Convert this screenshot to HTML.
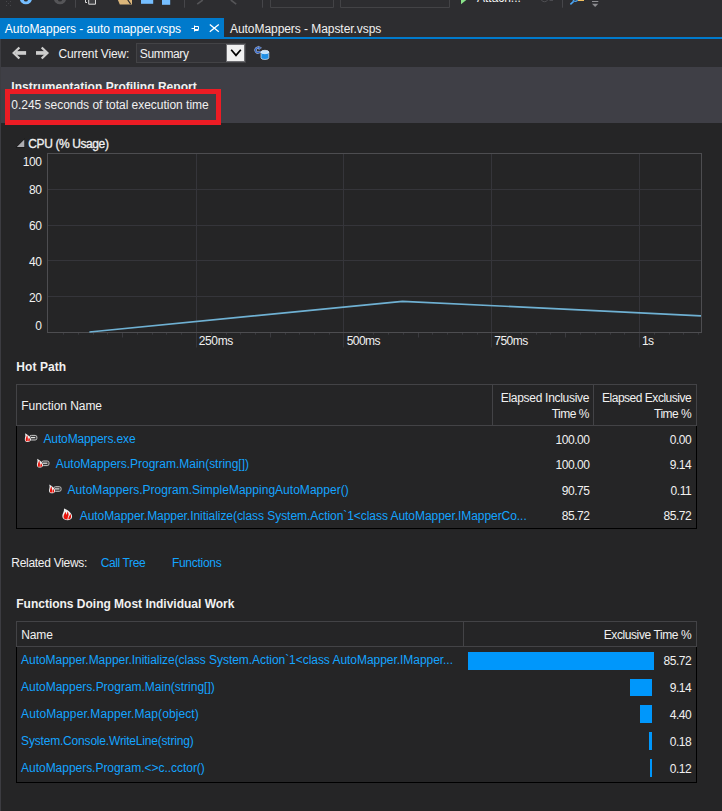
<!DOCTYPE html>
<html lang="en">
<head>
<meta charset="utf-8">
<title>Instrumentation Profiling Report</title>
<style>
html,body{margin:0;padding:0;}
body{width:722px;height:811px;overflow:hidden;position:relative;background:#252526;font-family:"Liberation Sans",sans-serif;font-size:12px;color:#f1f1f1;}
.a{position:absolute;}
.t{position:absolute;white-space:pre;line-height:16px;height:16px;font-size:12px;}
svg{position:absolute;left:0;top:0;}
</style>
</head>
<body>
<!-- top toolbar remnant + tab strip -->
<div class="a" style="left:0;top:0;width:722px;height:39px;background:#2d2d30"></div>
<div class="a" style="left:0;top:18px;width:224px;height:19px;background:#007acc"></div>
<div class="a" style="left:0;top:37px;width:722px;height:2px;background:#007acc"></div>
<!-- view toolbar -->
<div class="a" style="left:0;top:39px;width:722px;height:28px;background:#2d2d30"></div>
<div class="a" style="left:136px;top:43px;width:108px;height:18px;background:#333337;border:1px solid #434346"></div>
<div class="a" style="left:226px;top:44px;width:19px;height:18px;background:#f0f0f0;border:1px solid #6e6e72;box-sizing:border-box"></div>
<!-- header band -->
<div class="a" style="left:0;top:67px;width:722px;height:56px;background:#3f3f46"></div>
<div class="a" style="left:0;top:39px;width:1px;height:772px;background:#3c3c41"></div>

<!-- hot path table -->
<div class="a" style="left:16px;top:384px;width:679px;height:40px;border:1px solid #434346"></div>
<div class="a" style="left:492px;top:385px;width:1px;height:40px;background:#434346"></div>
<div class="a" style="left:593px;top:385px;width:1px;height:40px;background:#434346"></div>
<div class="a" style="left:16px;top:426px;width:679px;height:102px;border:1px solid #000;border-top:none"></div>

<!-- functions table -->
<div class="a" style="left:16px;top:621px;width:679px;height:24px;border:1px solid #434346"></div>
<div class="a" style="left:463px;top:622px;width:1px;height:24px;background:#434346"></div>
<div class="a" style="left:16px;top:647px;width:679px;height:135px;border:1px solid #000;border-top:none"></div>
<div class="a" style="left:468px;top:652px;width:186px;height:18px;background:#0097fb"></div>
<div class="a" style="left:630px;top:679px;width:22px;height:17px;background:#0097fb"></div>
<div class="a" style="left:640px;top:705px;width:12px;height:18px;background:#0097fb"></div>
<div class="a" style="left:649px;top:732px;width:3px;height:18px;background:#0097fb"></div>
<div class="a" style="left:650px;top:759px;width:2px;height:18px;background:#0097fb"></div>

<div class="t" id="t0" style="top:21px;color:#ffffff;left:4.75px;letter-spacing:-0.014px;">AutoMappers - auto mapper.vsps</div>
<div class="t" id="t1" style="top:21px;color:#f1f1f1;left:230px;letter-spacing:-0.057px;">AutoMappers - Mapster.vsps</div>
<div class="t" id="t2" style="top:-10px;color:#f1f1f1;left:477.1px;letter-spacing:-0.041px;">Attach...</div>
<div class="t" id="t3" style="top:46px;color:#f1f1f1;left:58.5px;letter-spacing:-0.132px;">Current View:</div>
<div class="t" id="t4" style="top:46px;color:#f1f1f1;left:139.75px;letter-spacing:-0.349px;">Summary</div>
<div class="t" id="t5" style="top:79px;color:#f1f1f1;font-weight:700;left:11.3px;letter-spacing:0.023px;">Instrumentation Profiling Report</div>
<div class="t" id="t6" style="top:97px;color:#f1f1f1;left:11.3px;letter-spacing:-0.020px;">0.245 seconds of total execution time</div>
<div class="t" id="t7" style="top:136px;color:#f1f1f1;-webkit-text-stroke:0.3px #f1f1f1;left:28.3px;letter-spacing:-0.397px;">CPU (% Usage)</div>
<div class="t" id="t8" style="top:154px;color:#f1f1f1;right:680.4px;letter-spacing:-0.420px;">100</div>
<div class="t" id="t9" style="top:182px;color:#f1f1f1;right:680.4px;letter-spacing:-0.420px;">80</div>
<div class="t" id="t10" style="top:218px;color:#f1f1f1;right:680.4px;letter-spacing:-0.420px;">60</div>
<div class="t" id="t11" style="top:254px;color:#f1f1f1;right:680.4px;letter-spacing:-0.420px;">40</div>
<div class="t" id="t12" style="top:290px;color:#f1f1f1;right:680.4px;letter-spacing:-0.420px;">20</div>
<div class="t" id="t13" style="top:318px;color:#f1f1f1;right:680.4px;letter-spacing:-0.420px;">0</div>
<div class="t" id="t14" style="top:333px;color:#f1f1f1;left:198.7px;letter-spacing:-0.358px;">250ms</div>
<div class="t" id="t15" style="top:333px;color:#f1f1f1;left:346.7px;letter-spacing:-0.558px;">500ms</div>
<div class="t" id="t16" style="top:333px;color:#f1f1f1;left:494.2px;letter-spacing:-0.483px;">750ms</div>
<div class="t" id="t17" style="top:333px;color:#f1f1f1;left:642px;letter-spacing:-0.600px;">1s</div>
<div class="t" id="t18" style="top:359px;color:#f1f1f1;font-weight:700;left:16.3px;letter-spacing:0.079px;">Hot Path</div>
<div class="t" id="t19" style="top:398px;color:#f1f1f1;left:21.3px;letter-spacing:-0.056px;">Function Name</div>
<div class="t" id="t20" style="top:390px;color:#f1f1f1;left:500.8px;letter-spacing:-0.299px;">Elapsed Inclusive</div>
<div class="t" id="t21" style="top:406px;color:#f1f1f1;left:551.7px;letter-spacing:-0.507px;">Time %</div>
<div class="t" id="t22" style="top:390px;color:#f1f1f1;left:602px;letter-spacing:-0.481px;">Elapsed Exclusive</div>
<div class="t" id="t23" style="top:406px;color:#f1f1f1;left:654px;letter-spacing:-0.507px;">Time %</div>
<div class="t" id="t24" style="top:431px;color:#14a4ff;left:43.5px;letter-spacing:-0.140px;">AutoMappers.exe</div>
<div class="t" id="t25" style="top:456px;color:#14a4ff;left:55.7px;letter-spacing:-0.024px;">AutoMappers.Program.Main(string[])</div>
<div class="t" id="t26" style="top:482px;color:#14a4ff;left:67.6px;letter-spacing:0.022px;">AutoMappers.Program.SimpleMappingAutoMapper()</div>
<div class="t" id="t27" style="top:508px;color:#14a4ff;left:79.7px;letter-spacing:-0.053px;">AutoMapper.Mapper.Initialize(class System.Action`1&lt;class AutoMapper.IMapperCo...</div>
<div class="t" id="t28" style="top:432px;color:#f1f1f1;right:132.4px;letter-spacing:-0.420px;">100.00</div>
<div class="t" id="t29" style="top:432px;color:#f1f1f1;right:30.7px;letter-spacing:-0.420px;">0.00</div>
<div class="t" id="t30" style="top:457px;color:#f1f1f1;right:132.4px;letter-spacing:-0.420px;">100.00</div>
<div class="t" id="t31" style="top:457px;color:#f1f1f1;right:30.7px;letter-spacing:-0.420px;">9.14</div>
<div class="t" id="t32" style="top:483px;color:#f1f1f1;right:132.4px;letter-spacing:-0.420px;">90.75</div>
<div class="t" id="t33" style="top:483px;color:#f1f1f1;right:30.7px;letter-spacing:-0.420px;">0.11</div>
<div class="t" id="t34" style="top:508px;color:#f1f1f1;right:132.4px;letter-spacing:-0.420px;">85.72</div>
<div class="t" id="t35" style="top:508px;color:#f1f1f1;right:30.7px;letter-spacing:-0.420px;">85.72</div>
<div class="t" id="t36" style="top:555px;color:#f1f1f1;left:11.3px;letter-spacing:-0.294px;">Related Views:</div>
<div class="t" id="t37" style="top:555px;color:#14a4ff;left:100.8px;letter-spacing:-0.404px;">Call Tree</div>
<div class="t" id="t38" style="top:555px;color:#14a4ff;left:171.9px;letter-spacing:-0.279px;">Functions</div>
<div class="t" id="t39" style="top:596px;color:#f1f1f1;font-weight:700;left:16.3px;letter-spacing:-0.010px;">Functions Doing Most Individual Work</div>
<div class="t" id="t40" style="top:627px;color:#f1f1f1;left:21.3px;letter-spacing:-0.139px;">Name</div>
<div class="t" id="t41" style="top:627px;color:#f1f1f1;left:603.7px;letter-spacing:-0.402px;">Exclusive Time %</div>
<div class="t" id="t42" style="top:652px;color:#14a4ff;left:21.1px;letter-spacing:-0.043px;">AutoMapper.Mapper.Initialize(class System.Action`1&lt;class AutoMapper.IMapper...</div>
<div class="t" id="t43" style="top:653px;color:#f1f1f1;right:30.7px;letter-spacing:-0.420px;">85.72</div>
<div class="t" id="t44" style="top:679px;color:#14a4ff;left:21.1px;letter-spacing:-0.014px;">AutoMappers.Program.Main(string[])</div>
<div class="t" id="t45" style="top:680px;color:#f1f1f1;right:30.7px;letter-spacing:-0.420px;">9.14</div>
<div class="t" id="t46" style="top:706px;color:#14a4ff;left:21.1px;letter-spacing:0.105px;">AutoMapper.Mapper.Map(object)</div>
<div class="t" id="t47" style="top:707px;color:#f1f1f1;right:30.7px;letter-spacing:-0.420px;">4.40</div>
<div class="t" id="t48" style="top:733px;color:#14a4ff;left:21.1px;letter-spacing:-0.188px;">System.Console.WriteLine(string)</div>
<div class="t" id="t49" style="top:734px;color:#f1f1f1;right:30.7px;letter-spacing:-0.420px;">0.18</div>
<div class="t" id="t50" style="top:760px;color:#14a4ff;left:21.1px;letter-spacing:-0.033px;">AutoMappers.Program.&lt;&gt;c..cctor()</div>
<div class="t" id="t51" style="top:761px;color:#f1f1f1;right:30.7px;letter-spacing:-0.420px;">0.12</div>

<!-- red annotation rectangle (on top of texts) -->
<div class="a" style="left:5px;top:89px;width:206px;height:26px;border:5px solid #ed1c24"></div>

<svg width="722" height="811" viewBox="0 0 722 811">
<g fill="#46464a"><rect x="6" y="1" width="1" height="1"/><rect x="10" y="1" width="1" height="1"/><rect x="8" y="3" width="1" height="1"/><rect x="6" y="5" width="1" height="1"/><rect x="10" y="5" width="1" height="1"/></g>
<circle cx="25.900" cy="-2" r="6.300" fill="#75beff"/><circle cx="25.900" cy="-0.650" r="2.150" fill="#2d2d30"/>
<circle cx="60" cy="-2" r="6.300" fill="#555558"/><circle cx="60" cy="-0.650" r="2.150" fill="#2d2d30"/>
<path d="M75.5 0V7.700" stroke="#46464a" stroke-width="1"/>
<path d="M184.5 0V7.700" stroke="#46464a" stroke-width="1"/>
<path d="M262.5 0V7.700" stroke="#46464a" stroke-width="1"/>
<path d="M562.5 0V7.700" stroke="#46464a" stroke-width="1"/>
<path d="M85.500 0V2.500H87" fill="none" stroke="#d8d8d8" stroke-width="1"/>
<path d="M88.700 0V4.200H95.500V0" fill="#3f3f42" stroke="#d8d8d8" stroke-width="1"/>
<path d="M117.900 0L119.800 4.600H132V0Z" fill="#dcb67a"/><path d="M127.800 0L130.600 4" stroke="#2d2d30" stroke-width="1.3"/>
<rect x="141" y="0" width="12.200" height="3.800" fill="#75beff"/>
<rect x="162" y="0" width="8.200" height="4.800" fill="#75beff"/>
<path d="M197.200 4.200L202.800 0" stroke="#555558" stroke-width="1.600"/>
<path d="M230.800 0L236.200 4.200" stroke="#555558" stroke-width="1.600"/>
<path d="M270.500 0V7.500H333.500V0" fill="none" stroke="#434346" stroke-width="1"/>
<path d="M340.500 0V7.500H449.500V0" fill="none" stroke="#434346" stroke-width="1"/>
<path d="M461 0H466.300L461 4.200Z" fill="#8ae28a"/>
<path d="M541.500 0A3.100 2.300 0 0 0 547.500 0" fill="none" stroke="#505054" stroke-width="1"/><rect x="549.500" y="0" width="3.500" height="0.900" fill="#505054"/>
<path d="M570.400 4.400L573.600 1.400" stroke="#4ba6f5" stroke-width="1.500"/><path d="M573 0A2.400 1.800 0 0 0 577.600 0" fill="none" stroke="#4ba6f5" stroke-width="1.200"/>
<rect x="578" y="0" width="6" height="1" fill="#f0c060"/>
<rect x="592" y="1" width="6.300" height="1" fill="#8c8c90"/><path d="M592 3.800H598.300L595.150 7Z" fill="#8c8c90"/>
<g fill="none" stroke="#ffffff" stroke-width="1"><path d="M191.500 28.500H194.500M194.500 25.500V31.500M194.500 26.500H198.500V29.500H194.500M194.500 30.500H198.500"/></g>
<path d="M209.800 24.400L218.800 31.800M218.800 24.400L209.800 31.800" stroke="#ffffff" stroke-width="1.300"/>
<g fill="none" stroke="#cdcdcd" stroke-width="2.300"><path d="M19.400 47.500L13.700 53L19.400 58.500"/><path d="M41.700 47.500L47.400 53L41.700 58.500"/></g>
<rect x="15.500" y="51.100" width="10.600" height="3.700" fill="#cdcdcd"/><rect x="36" y="51.100" width="10.600" height="3.700" fill="#cdcdcd"/>
<path d="M231.200 49.800L236 55.400L240.800 49.800" fill="none" stroke="#000" stroke-width="1.700"/>
<g><path d="M259.600 48.200A2.500 2.500 0 1 0 260.200 51.200" fill="none" stroke="#b4c4e0" stroke-width="2.200"/><path d="M259.600 48.200A2.500 2.500 0 1 0 260.200 51.200" fill="none" stroke="#2f63c8" stroke-width="1.200"/><path d="M258.400 46.200L261.600 47.800L258.800 49.800Z" fill="#2f63c8" stroke="#b4c4e0" stroke-width="0.400"/>
<path d="M261 52V57.800A3.900 1.700 0 0 0 268.800 57.800V52Z" fill="#1e8fe6" stroke="#dcecfa" stroke-width="0.700"/><ellipse cx="264.900" cy="52" rx="3.900" ry="1.700" fill="#c4e2fb" stroke="#eaf4fd" stroke-width="0.700"/></g>
<path d="M15.600 147.600H25V138.200Z" fill="#141414"/><path d="M16.800 147H24.300V139.500Z" fill="#acacb0"/>
<path d="M48 189.5H701M48 225.5H701M48 260.5H701M48 296.5H701M196.5 154V347.500M343.5 154V347.500M491.5 154V347.500M639.5 154V347.500" stroke="#35353a" stroke-width="1" fill="none"/>
<path d="M63.5 333V334.7M78.5 333V334.7M93.5 333V334.7M107.5 333V334.7M122.5 333V337.5M137.5 333V334.7M152.5 333V334.7M166.5 333V334.7M181.5 333V334.7M211.5 333V334.7M226.5 333V334.7M240.5 333V334.7M255.5 333V334.7M270.5 333V337.5M285.5 333V334.7M299.5 333V334.7M314.5 333V334.7M329.5 333V334.7M358.5 333V334.7M373.5 333V334.7M388.5 333V334.7M403.5 333V334.7M418.5 333V337.5M432.5 333V334.7M447.5 333V334.7M462.5 333V334.7M477.5 333V334.7M506.5 333V334.7M521.5 333V334.7M536.5 333V334.7M550.5 333V334.7M565.5 333V337.5M580.5 333V334.7M595.5 333V334.7M610.5 333V334.7M624.5 333V334.7M654.5 333V334.7M669.5 333V334.7M683.5 333V334.7M698.5 333V334.7" stroke="#3a3a3e" stroke-width="1" fill="none"/>
<rect x="47.500" y="153.500" width="654" height="179" fill="none" stroke="#4d4d50" stroke-width="1"/>
<path d="M89.400 332L402.500 301.300L701 315.800" fill="none" stroke="#6fb1d3" stroke-width="1.700" stroke-linejoin="round"/>
<g transform="translate(24.6,433)">
<rect x="5" y="2.400" width="7.300" height="4.600" rx="1.700" fill="#3a3a3a" stroke="#c4c4c4" stroke-width="1"/>
<path d="M6.200 4.600H10.600" stroke="#ececec" stroke-width="1.100"/>
<path d="M0.400 0.200C2.400 1.400 6.300 3.800 6.300 6.600C6.300 8.300 4.800 9 3.200 9C1.500 9 0.200 8.100 0.200 6.400C0.200 4.600 1.400 3 0.400 0.200Z" fill="#f0f0f0"/>
<path d="M1.300 7.900C0.700 6.400 1.600 4.200 2.500 2C3.200 3.600 3.400 5.600 3.100 8.200C2.400 8.400 1.700 8.300 1.300 7.900Z" fill="#e8120a"/>
<path d="M3.700 8.300C3.500 6.700 3.800 5.600 4.300 4.700C5.300 5.600 5.700 7 4.900 8.100C4.500 8.300 4.100 8.400 3.700 8.300Z" fill="#e8120a"/>
</g>
<g transform="translate(36.7,458.6)">
<rect x="5" y="2.400" width="7.300" height="4.600" rx="1.700" fill="#3a3a3a" stroke="#c4c4c4" stroke-width="1"/>
<path d="M6.200 4.600H10.600" stroke="#ececec" stroke-width="1.100"/>
<path d="M0.400 0.200C2.400 1.400 6.300 3.800 6.300 6.600C6.300 8.300 4.800 9 3.200 9C1.500 9 0.200 8.100 0.200 6.400C0.200 4.600 1.400 3 0.400 0.200Z" fill="#f0f0f0"/>
<path d="M1.300 7.900C0.700 6.400 1.600 4.200 2.500 2C3.200 3.600 3.400 5.600 3.100 8.200C2.400 8.400 1.700 8.300 1.300 7.900Z" fill="#e8120a"/>
<path d="M3.700 8.300C3.500 6.700 3.800 5.600 4.300 4.700C5.300 5.600 5.700 7 4.900 8.100C4.500 8.300 4.100 8.400 3.700 8.300Z" fill="#e8120a"/>
</g>
<g transform="translate(48.8,484.3)">
<rect x="5" y="2.400" width="7.300" height="4.600" rx="1.700" fill="#3a3a3a" stroke="#c4c4c4" stroke-width="1"/>
<path d="M6.200 4.600H10.600" stroke="#ececec" stroke-width="1.100"/>
<path d="M0.400 0.200C2.400 1.400 6.300 3.800 6.300 6.600C6.300 8.300 4.800 9 3.200 9C1.500 9 0.200 8.100 0.200 6.400C0.200 4.600 1.400 3 0.400 0.200Z" fill="#f0f0f0"/>
<path d="M1.300 7.900C0.700 6.400 1.600 4.200 2.500 2C3.200 3.600 3.400 5.600 3.100 8.200C2.400 8.400 1.700 8.300 1.300 7.900Z" fill="#e8120a"/>
<path d="M3.700 8.300C3.500 6.700 3.800 5.600 4.300 4.700C5.300 5.600 5.700 7 4.900 8.100C4.500 8.300 4.100 8.400 3.700 8.300Z" fill="#e8120a"/>
</g>
<g transform="translate(62.2,508.3)">
<path d="M1.800 0.200C4.300 1.100 9.900 4.200 9.900 8.100C9.900 10.700 7.800 11.900 5 11.900C2.100 11.900 0.100 10.600 0.100 7.800C0.100 5.400 2.200 3.300 1.800 0.200Z" fill="#f0f0f0"/>
<path d="M1.700 10C0.600 8 2.200 5.600 3.300 3.400C3.900 4.800 4.100 5.600 4.300 6.600C4.800 5.400 5.200 4.400 5.200 3.200C6.600 4.600 6.800 7 5.800 8.600C5.400 9.600 5.200 10.400 5.300 11.100C3.800 11.300 2.500 10.900 1.700 10Z" fill="#e8120a"/>
<path d="M6.200 11C6 9.400 6.800 8.400 7.600 7C7.900 6.300 8 5.800 8 5.400C9.100 6.800 9.200 9.200 8.100 10.400C7.500 10.800 6.900 11 6.200 11Z" fill="#e8120a"/>
</g>
</svg>
</body>
</html>
